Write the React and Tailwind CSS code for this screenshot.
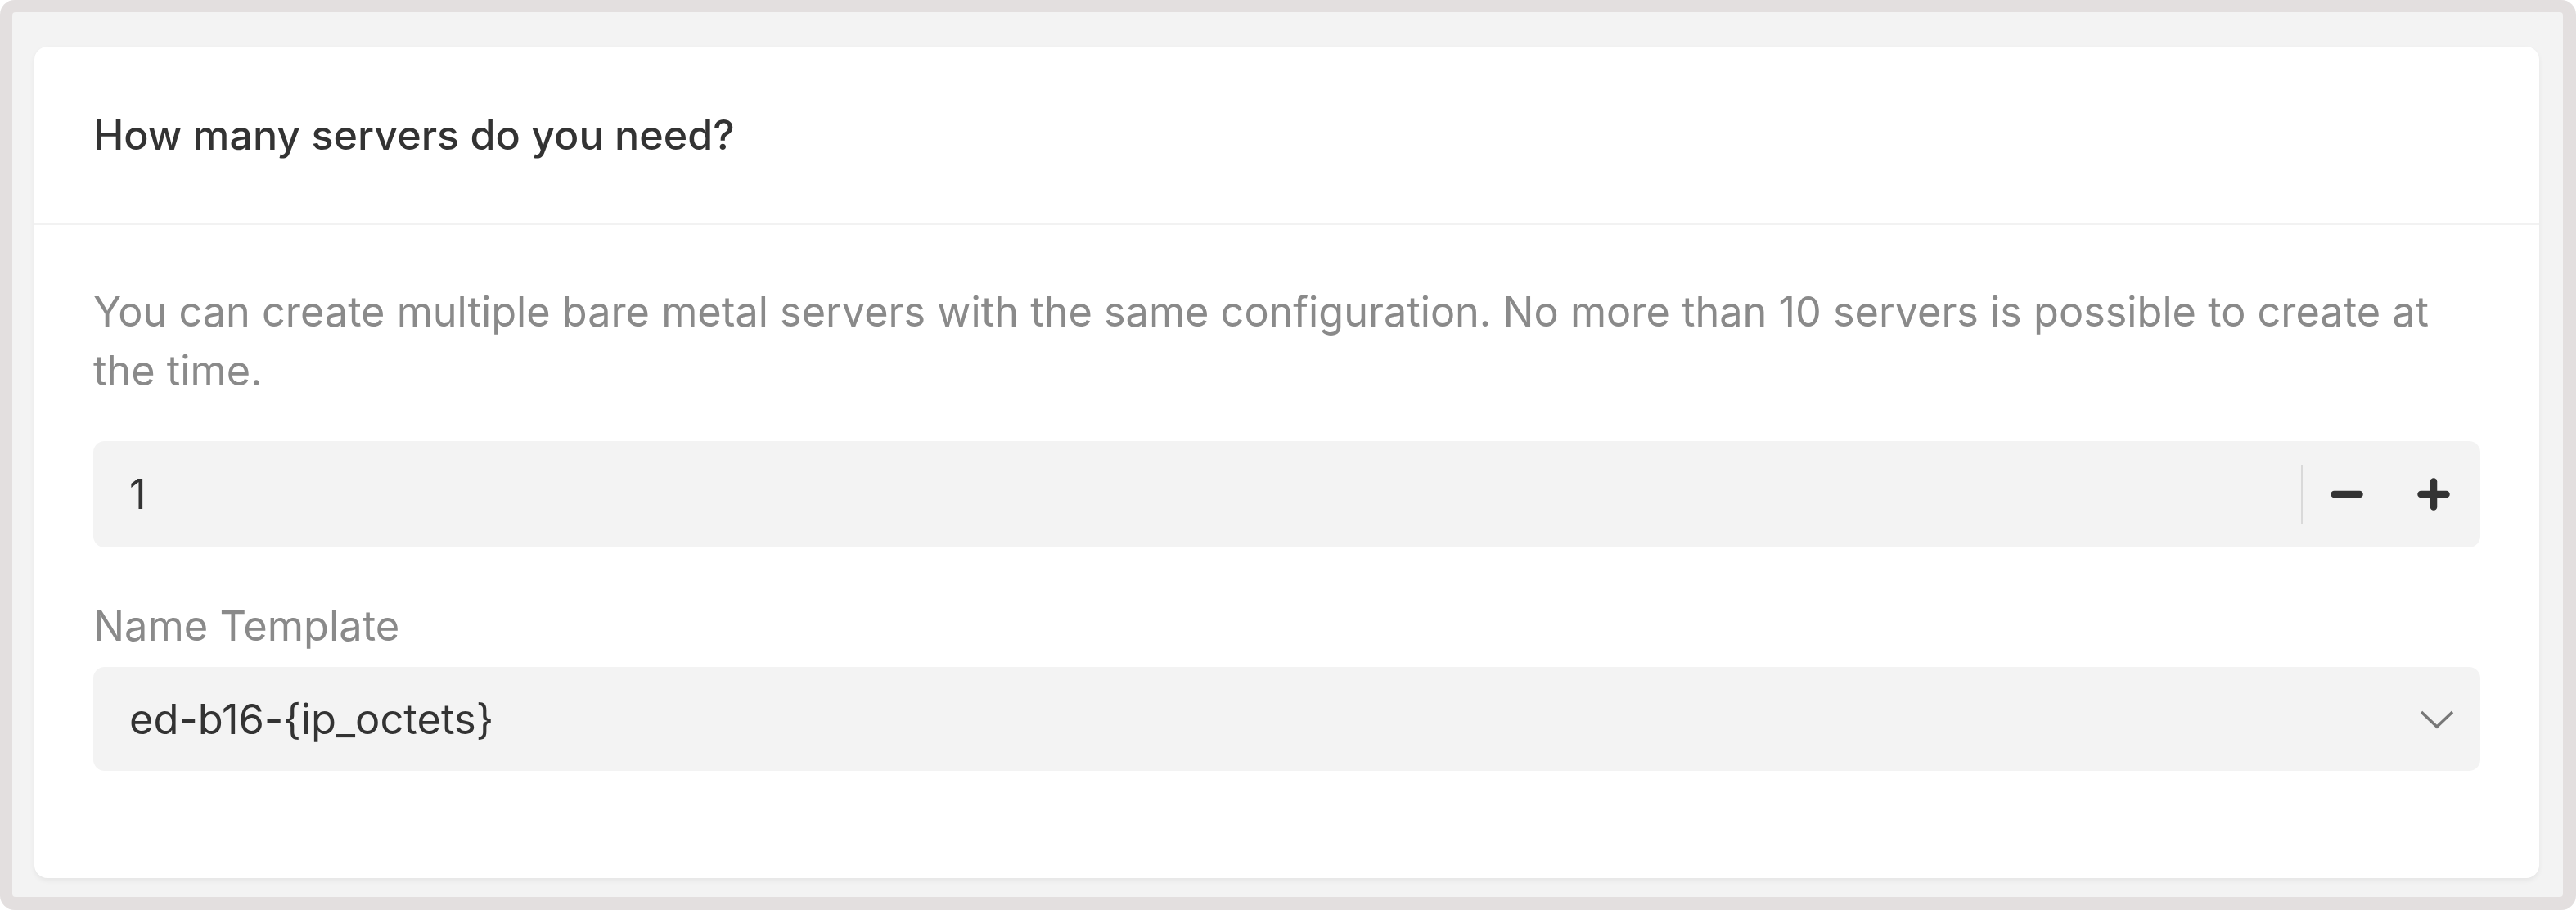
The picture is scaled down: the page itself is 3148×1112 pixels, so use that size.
import React, { useState } from 'react';

const MinusIcon = () => (
    <svg width="40" height="40" viewBox="0 0 40 40" fill="none">
        <line x1="4.5" y1="20" x2="35.5" y2="20" stroke="#333333" strokeWidth="8.5" strokeLinecap="round" />
    </svg>
);

const PlusIcon = () => (
    <svg width="40" height="40" viewBox="0 0 40 40" fill="none">
        <line x1="4.5" y1="20" x2="35.5" y2="20" stroke="#333333" strokeWidth="8.5" strokeLinecap="round" />
        <line x1="20" y1="4.5" x2="20" y2="35.5" stroke="#333333" strokeWidth="8.5" strokeLinecap="round" />
    </svg>
);

const ChevronIcon = () => (
    <svg width="42" height="24" viewBox="0 0 42 24" fill="none">
        <polyline points="2,3 21,21 40,3" stroke="#777777" strokeWidth="3.5" strokeLinejoin="miter" />
    </svg>
);

const App = () => {
    const [count, setCount] = useState(1);

    return (
        <div className="bg-white" style={{ fontFamily: 'Inter, "Noto Sans", sans-serif' }}>
            <div className="h-[1112px] rounded-[18px] bg-[#e3dfdf] pt-[15px] pl-[15px] pr-[16px] pb-[16px]">
                <div className="h-full rounded-[4px] bg-[#f3f3f3] pt-[42px] pl-[27px] pr-[29px] pb-[23px]">
                    <div className="h-full rounded-[16px] bg-white shadow-[0_3px_6px_rgba(0,0,0,0.06)] flex flex-col">
                        {/* Header */}
                        <div className="h-[218px] flex items-center px-[72px] border-b-2 border-[#f2f2f2]">
                            <h2 className="text-[50.2px] leading-[72px] font-medium text-[#333333]">How many servers do you need?</h2>
                        </div>

                        {/* Body */}
                        <div className="px-[72px] pt-[70px]">
                            <p className="text-[50.4px] leading-[72px] text-[#8a8a8a]">
                                You can create multiple bare metal servers with the same configuration. No more than 10 servers is possible to create at the time.
                            </p>

                            <div className="mt-[50px] h-[130px] rounded-[14px] bg-[#f3f3f3] flex items-center pl-[44px] pr-[37px]">
                                <span className="flex-1 text-[50.6px] leading-[72px] text-[#333333]">{count}</span>
                                <div className="w-[2px] h-[72px] bg-[#d9d9d9]" />
                                <button onClick={() => setCount(c => Math.max(1, c - 1))} className="ml-[34px] flex items-center">
                                    <MinusIcon />
                                </button>
                                <button onClick={() => setCount(c => Math.min(10, c + 1))} className="ml-[66px] flex items-center">
                                    <PlusIcon />
                                </button>
                            </div>

                            <label className="block mt-[60px] text-[50.6px] leading-[72px] text-[#8a8a8a]">Name Template</label>

                            <div className="mt-[14px] h-[127px] rounded-[14px] bg-[#f3f3f3] flex items-center justify-between pl-[44px] pr-[32px]">
                                <span className="text-[50.6px] leading-[72px] text-[#333333]">ed-b16-{'{ip_octets}'}</span>
                                <ChevronIcon />
                            </div>
                        </div>
                    </div>
                </div>
            </div>
        </div>
    );
};

export default App;
